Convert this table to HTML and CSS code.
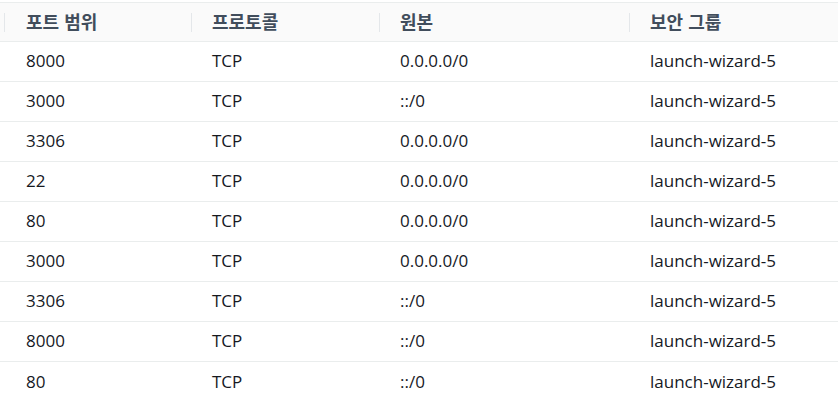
FILE: index.html
```html
<!DOCTYPE html>
<html lang="ko">
<head>
<meta charset="utf-8">
<link rel="stylesheet" href="styles.css">
</head>
<body>
<div class="table">
  <div class="row head">
    <div class="cell c1"><span class="th">포트 범위</span></div>
    <div class="cell c2"><span class="th">프로토콜</span></div>
    <div class="cell c3"><span class="th">원본</span></div>
    <div class="cell c4"><span class="th">보안 그룹</span></div>
  </div>
  <div class="row"><div class="cell c1">8000</div><div class="cell c2">TCP</div><div class="cell c3">0.0.0.0/0</div><div class="cell c4">launch-wizard-5</div></div>
  <div class="row"><div class="cell c1">3000</div><div class="cell c2">TCP</div><div class="cell c3">::/0</div><div class="cell c4">launch-wizard-5</div></div>
  <div class="row"><div class="cell c1">3306</div><div class="cell c2">TCP</div><div class="cell c3">0.0.0.0/0</div><div class="cell c4">launch-wizard-5</div></div>
  <div class="row"><div class="cell c1">22</div><div class="cell c2">TCP</div><div class="cell c3">0.0.0.0/0</div><div class="cell c4">launch-wizard-5</div></div>
  <div class="row"><div class="cell c1">80</div><div class="cell c2">TCP</div><div class="cell c3">0.0.0.0/0</div><div class="cell c4">launch-wizard-5</div></div>
  <div class="row"><div class="cell c1">3000</div><div class="cell c2">TCP</div><div class="cell c3">0.0.0.0/0</div><div class="cell c4">launch-wizard-5</div></div>
  <div class="row"><div class="cell c1">3306</div><div class="cell c2">TCP</div><div class="cell c3">::/0</div><div class="cell c4">launch-wizard-5</div></div>
  <div class="row"><div class="cell c1">8000</div><div class="cell c2">TCP</div><div class="cell c3">::/0</div><div class="cell c4">launch-wizard-5</div></div>
  <div class="row last"><div class="cell c1">80</div><div class="cell c2">TCP</div><div class="cell c3">::/0</div><div class="cell c4">launch-wizard-5</div></div>
</div>
</body>
</html>
```
FILE: styles.css
```css
html, body {
  margin: 0;
  padding: 0;
  background: #ffffff;
}
body {
  padding-top: 2px;
  font-family: "Open Sans", "Noto Sans CJK KR", sans-serif;
  font-size: 17px;
  color: #16191f;
}
.table {
  display: flex;
  flex-direction: column;
  border-top: 1px solid #eaeded;
}
.row {
  display: grid;
  grid-template-columns: 191px 188px 250px 1fr;
  height: 40px;
  border-bottom: 1px solid #eaeded;
  box-sizing: border-box;
  align-items: center;
}
.row.head {
  height: 39px;
  background: #fafafa;
  border-bottom: 1px solid #eaeded;
}
.row.last {
  border-bottom: none;
}
.cell {
  padding-left: 21px;
  white-space: nowrap;
  line-height: 20px;
  padding-bottom: 1px;
}
.c1 {
  padding-left: 26px;
}
.head .cell {
  position: relative;
  height: 100%;
  display: flex;
  align-items: center;
  box-sizing: border-box;
  padding-bottom: 2px;
}
.head .cell::before {
  content: "";
  position: absolute;
  left: 0;
  top: 10px;
  bottom: 9px;
  width: 1px;
  background: #e4e7ea;
}
.head .c1::before {
  left: 4px;
}
.th {
  font-weight: 700;
  color: #414d5c;
  font-family: "Noto Sans CJK KR", sans-serif;
  font-size: 18px;
}
```
